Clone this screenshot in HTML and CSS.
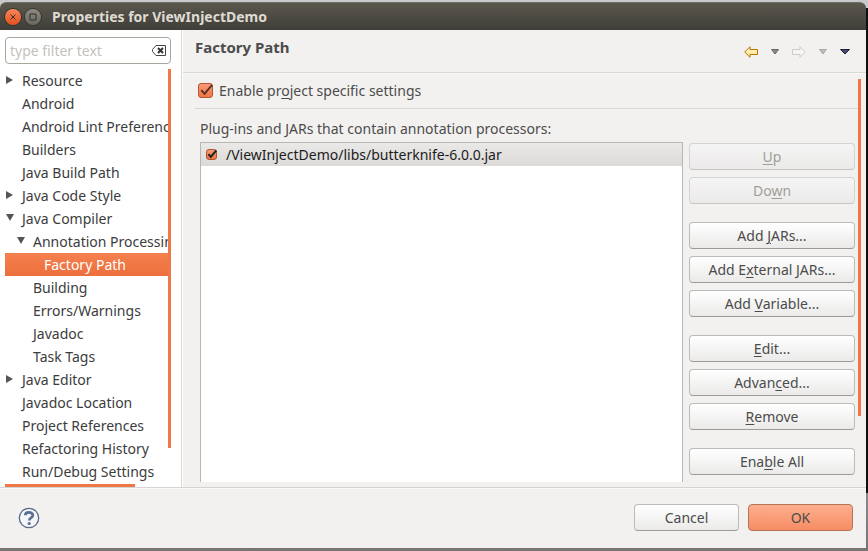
FILE: index.html
```
<!DOCTYPE html>
<html lang="en">
<head>
<meta charset="utf-8">
<title>Properties for ViewInjectDemo</title>
<link rel="stylesheet" href="styles.css">
</head>
<body>
<div class="window">
  <header class="titlebar">
    <button class="wm close" aria-label="Close"><svg viewBox="0 0 16 16"><path d="M5.5 5.5l5 5M10.500 5.500l-5 5"/></svg></button>
    <button class="wm max" aria-label="Maximize"><svg viewBox="0 0 16 16"><path d="M5 5h6v6H5z"/></svg></button>
    <h1>Properties for ViewInjectDemo</h1>
  </header>

  <div class="main">
    <nav class="sidebar">
      <div class="search">
        <input type="text" placeholder="type filter text" aria-label="Filter">
        <button class="clear" aria-label="Clear"><svg viewBox="0 0 14 11"><path d="M4 .5h9.500v10H4L.5 6.500v-2z" fill="#fff" stroke="#444"/><path d="M6 3l5 5M11 3l-5 5" stroke="#333" stroke-width="2" fill="none"/></svg></button>
      </div>
      <div class="treebox">
        <ul class="tree">
          <li class="closed">Resource</li>
          <li>Android</li>
          <li>Android Lint Preferences</li>
          <li>Builders</li>
          <li>Java Build Path</li>
          <li class="closed">Java Code Style</li>
          <li class="open">Java Compiler</li>
          <li class="open l2">Annotation Processing</li>
          <li class="l3 selected">Factory Path</li>
          <li class="l2">Building</li>
          <li class="l2">Errors/Warnings</li>
          <li class="l2">Javadoc</li>
          <li class="l2">Task Tags</li>
          <li class="closed">Java Editor</li>
          <li>Javadoc Location</li>
          <li>Project References</li>
          <li>Refactoring History</li>
          <li>Run/Debug Settings</li>
        </ul>
        <div class="vbar"><div class="thumb"></div></div>
      </div>
      <div class="hbar"><div class="thumb"></div></div>
    </nav>

    <section class="page">
      <div class="pagehead">
        <h2>Factory Path</h2>
        <div class="tools">
          <button aria-label="Back"><svg width="14" height="12" viewBox="0 0 14 12"><defs><linearGradient id="g" x2="0" y2="1"><stop offset="0" stop-color="#fffbe4"/><stop offset="1" stop-color="#ffdc72"/></linearGradient></defs><path d="M.7 6L6 .7V3.500h7.500v5H6v2.800z" fill="url(#g)" stroke="#b07508"/></svg></button>
          <button aria-label="Back history"><svg width="8" height="6" viewBox="0 0 8 6"><path d="M.5.5h7L4 5z" fill="#888" stroke="#666"/></svg></button>
          <button aria-label="Forward"><svg width="14" height="12" viewBox="0 0 14 12"><path d="M13.300 6L8 .7V3.500H.5v5H8v2.800z" fill="#f6f5f4" stroke="#ccc"/></svg></button>
          <button aria-label="Forward history"><svg width="8" height="6" viewBox="0 0 8 6"><path d="M.5.5h7L4 5z" fill="#bbb" stroke="#aaa"/></svg></button>
          <button aria-label="Menu"><svg width="10" height="6" viewBox="0 0 10 6"><path d="M.5.5h9L5 5z" fill="#4a4a78" stroke="#201c38"/></svg></button>
        </div>
      </div>
      <div class="scroll">
        <div class="content">
          <label class="enable"><span class="check"><input type="checkbox" checked><svg viewBox="0 0 16 16"><path d="M3.500 7.500L7 11.500 15 2"/></svg></span><span>Enable pr<u>o</u>ject specific settings</span></label>
          <div class="group">
            <p class="caption" id="cap">Plug-ins and JARs that contain annotation processors:</p>
            <div class="cols">
              <div class="list">
                <table aria-labelledby="cap"><tbody><tr><td><label><span class="check small"><input type="checkbox" checked><svg viewBox="0 0 16 16"><path d="M3.500 7.500L7 11.500 15 2"/></svg></span><span>/ViewInjectDemo/libs/butterknife-6.0.0.jar</span></label></td></tr></tbody></table>
              </div>
              <div class="actions">
                <div class="set"><button class="btn" disabled><u>U</u>p</button><button class="btn" disabled>Do<u>w</u>n</button></div>
                <div class="set"><button class="btn">Add <u>J</u>ARs...</button><button class="btn">Add E<u>x</u>ternal JARs...</button><button class="btn">Add <u>V</u>ariable...</button></div>
                <div class="set"><button class="btn"><u>E</u>dit...</button><button class="btn">Advan<u>c</u>ed...</button><button class="btn"><u>R</u>emove</button></div>
                <div class="set"><button class="btn">Ena<u>b</u>le All</button></div>
              </div>
            </div>
          </div>
        </div>
        <div class="vbar"><div class="thumb"></div></div>
      </div>
    </section>
  </div>

  <footer class="footer">
    <button class="help" aria-label="Help"><svg viewBox="0 0 22 22"><circle cx="11" cy="11" r="9.700" fill="#f4f6f8" stroke="#5a6b8c" stroke-width="1.300"/><path d="M7.300 8.300C7.300 4.400 14.800 4.400 14.800 8.200c0 2.500-3.500 2.600-3.500 5.200" fill="none" stroke="#5a6f94" stroke-width="2.800"/><circle cx="11.200" cy="16.500" r="1.600" fill="#5a6f94"/></svg></button>
    <div class="confirm"><button class="btn">Cancel</button><button class="btn primary">OK</button></div>
  </footer>
</div>
</body>
</html>
```
FILE: styles.css
```
* { box-sizing: border-box; }
body {
  margin: 0;
  min-height: 100vh;
  padding: 2px 2px 3px 0;
  display: flex;
  background: linear-gradient(#c9c9cc 8px, #10100e 8px, #10100e calc(100% - 58px), #8a8888 calc(100% - 58px), #777474);
  font: 14px/23px "Noto Sans", "Open Sans", sans-serif;
  color: #4c4c4c;
}
button, input { font: inherit; color: inherit; margin: 0; }
button { padding: 0; border: 0; background: none; }
svg { display: block; }
h1, h2, p, ul { margin: 0; padding: 0; }
u { text-underline-offset: 2px; }

.window { flex: 1; min-width: 0; display: flex; flex-direction: column; background: #f2f1f0; border-radius: 6px 6px 0 0; }
.titlebar {
  height: 28px; flex: none; display: flex; align-items: center; gap: 4px; padding-left: 5px;
  border-radius: 6px 6px 0 0; border-top: 1px solid #6e6c62;
  background: linear-gradient(#5a574e, #3f3e38);
}
.titlebar h1 { margin-left: 7px; font-size: 14px; line-height: 20px; color: #dfdbd2; }
.wm { width: 16px; height: 16px; border-radius: 50%; box-shadow: 0 0 0 1px #35342f; }
.wm svg { width: 16px; height: 16px; fill: none; stroke: #35312b; }
.close { background: linear-gradient(#f9865c, #e2501d); }
.max { background: linear-gradient(#8b8980, #69675f); }

.main { flex: 1; display: flex; min-height: 0; border-bottom: 1px solid #d6d4d2; }
.sidebar { flex: 0 0 182px; min-width: 0; display: flex; flex-direction: column; padding: 7px 10px 0 5px; background: #fff; border-right: 1px solid #d9d8d6; color: #3c3c3c; }
.search { display: flex; align-items: center; height: 27px; padding: 0 4px; border: 1px solid #aaa69e; border-radius: 4px; background: #fff; }
.search input { flex: 1; min-width: 0; padding: 0; border: 0; outline: 0; background: none; }
.search input::placeholder { color: #c5c1bc; opacity: 1; }
.clear svg { width: 14px; height: 11px; }
.treebox { flex: 1; display: flex; margin-top: 5px; }
.tree { flex: 1; min-width: 0; overflow: hidden; list-style: none; }
.tree li { position: relative; padding-left: 17px; white-space: nowrap; }
.tree .l2 { padding-left: 28px; }
.tree .l3 { padding-left: 39px; }
.tree .selected { color: #fff; background: linear-gradient(#f4814f, #ec6f3c); }
.tree .closed::before, .tree .open::before { content: ""; position: absolute; left: 1px; top: 7px; background: #555; }
.tree .closed::before { width: 7px; height: 8px; clip-path: polygon(0 0, 100% 50%, 0 100%); }
.tree .open::before { width: 8px; height: 7px; clip-path: polygon(0 0, 100% 0, 50% 100%); }
.tree .open.l2::before { left: 12px; }
.vbar { flex: 0 0 3px; }
.thumb { background: #f07746; }
.vbar .thumb { height: 379px; }
.hbar { height: 3px; margin-top: 1px; }
.hbar .thumb { height: 3px; width: 130px; }

.page { flex: 1; min-width: 0; display: flex; flex-direction: column; border-left: 1px solid #fff; }
.pagehead { height: 43px; padding: 0 16px 0 12px; display: flex; justify-content: space-between; border-bottom: 1px solid #d9d8d6; box-shadow: 0 1px #f9f9f8; }
.pagehead h2 { margin-top: 6px; font-size: 15px; line-height: 23px; }
.tools { display: flex; align-items: center; gap: 13px; padding-top: 2px; }
.scroll { flex: 1; display: flex; padding: 6px 5px 0 12px; }
.scroll .thumb { height: 337px; }
.content { flex: 1; min-width: 0; display: flex; flex-direction: column; }
.enable { display: flex; align-items: center; gap: 6px; height: 30px; padding: 0 0 6px 3px; border-bottom: 1px solid #d9d8d6; }
.check { position: relative; flex: none; width: 15px; height: 15px; }
.check input { appearance: none; display: block; width: 100%; height: 100%; border: 1px solid #b4542e; border-radius: 3px; background: linear-gradient(#f99a75, #f07746); }
.check svg { position: absolute; inset: 0; width: 100%; height: 100%; overflow: visible; fill: none; stroke: #553224; stroke-width: 2; pointer-events: none; }
.check.small { width: 11px; height: 11px; }
.check.small svg { stroke: #222; stroke-width: 3; }
.group { flex: 1; display: flex; flex-direction: column; padding: 8px 3px 5px 5px; }
.cols { flex: 1; display: flex; gap: 6px; margin-top: 2px; }
.list { flex: 1; min-width: 0; border: 1px solid #bab7b2; border-bottom: 0; background: #fff; }
.list table { width: 100%; border-collapse: collapse; }
.list td { padding: 0 5px; color: #1c1c1c; background: linear-gradient(#eae9e8, #dbdad8); }
.list label { display: flex; align-items: center; gap: 9px; height: 23px; }
.actions { flex: 0 0 166px; display: flex; flex-direction: column; gap: 18px; padding-top: 1px; }
.set { display: flex; flex-direction: column; gap: 7px; }
.btn {
  height: 27px; border: 1px solid #bdbbb8; border-bottom-color: #9d9b98; border-radius: 4px;
  background: linear-gradient(#fff, #ebeae9); line-height: 23px;
}
.btn:disabled { color: #a09e9b; border-color: #d6d4d2; border-bottom-color: #c8c6c4; background: linear-gradient(#f6f5f5, #ebeae9); }

.footer { flex: none; height: 60px; display: flex; justify-content: space-between; align-items: center; padding: 0 13px 2px 18px; border-top: 1px solid #fafafa; }
.help svg { width: 22px; height: 22px; }
.confirm { display: flex; gap: 9px; }
.confirm .btn { width: 105px; }
.btn.primary { border-color: #b5755a; background: linear-gradient(#fdae8e, #f68d64); }
```
